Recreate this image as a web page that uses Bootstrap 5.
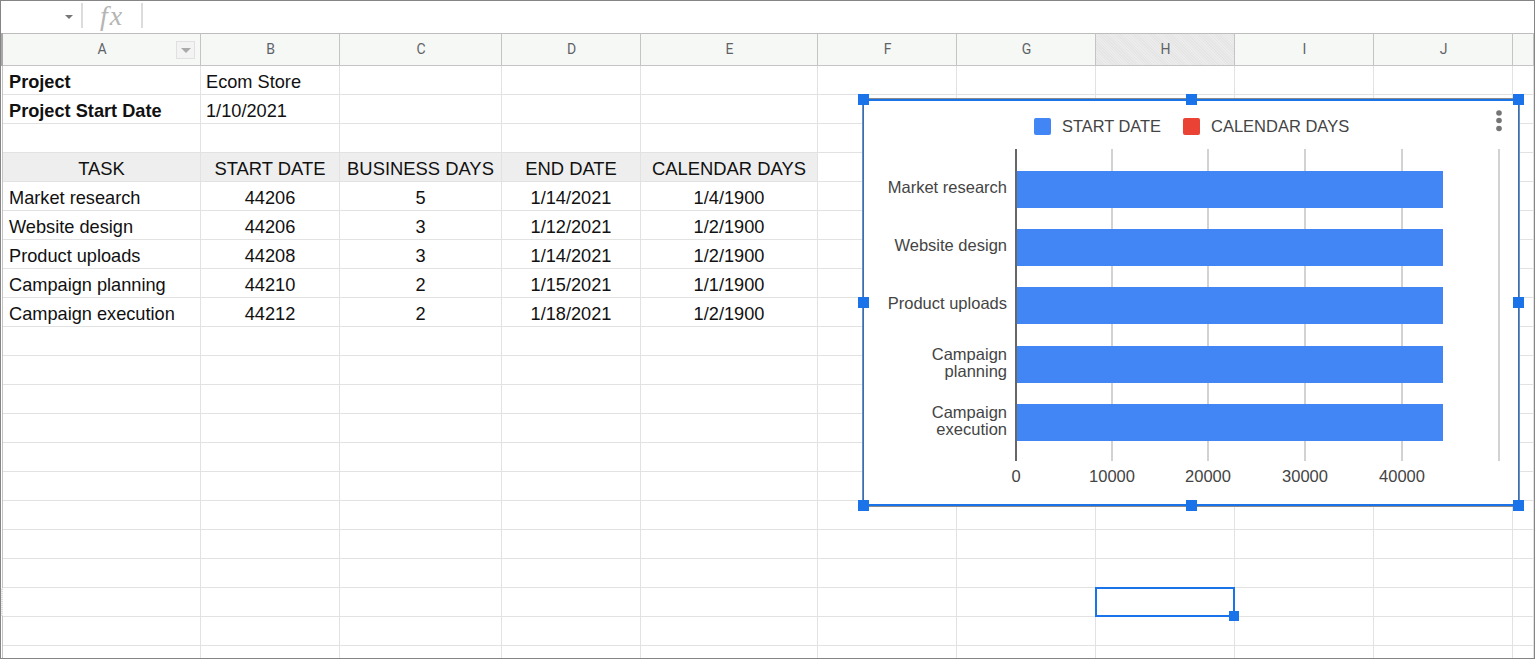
<!DOCTYPE html>
<html lang="en">
<head>
<meta charset="UTF-8" />
<meta name="viewport" content="width=device-width, initial-scale=1.0" />
<title>Ecom Store - Gantt</title>
<link href="https://cdn.jsdelivr.net/npm/bootstrap@5.3.0/dist/css/bootstrap.min.css" rel="stylesheet" />
<style>
  html, body { height: 100%; overflow: hidden; background: #fff; }
  .sheet-frame { width: 1535px; height: 659px; border: 1px solid #858585; overflow: hidden; position: relative; font-family: "Liberation Sans", Arial, sans-serif; color: #111; }
  .formula-bar { height: 32px; }
  .name-box { width: 80px; }
  .caret-down { width: 0; height: 0; border-left: 4px solid transparent; border-right: 4px solid transparent; border-top: 4px solid #777; margin: 14px 8px 0 0; }
  .bar-divider { width: 2px; height: 25px; margin-top: 2px; background: #dcdcdc; }
  .fx-label { width: 58px; height: 32px; font-family: "Liberation Serif", serif; font-style: italic; font-size: 28px; letter-spacing: 2px; line-height: 30px; color: #b5b5b5; padding-left: 17px; }
  .sheet-body { padding-left: 2px; background: linear-gradient(90deg, #fff 1px, #c4c4c4 1px) no-repeat; background-size: 2px 100%; }
  .grid-table { table-layout: fixed; border-collapse: separate; border-spacing: 0; width: 1531px; font-size: 18.2px; background: #fff; }
  .grid-table td, .grid-table th { height: 29px; padding: 4px 0 0 5px; border-right: 1px solid #e2e2e2; border-bottom: 1px solid #e2e2e2; white-space: nowrap; overflow: hidden; line-height: 24px; }
  .grid-table td:first-child { padding-left: 6px; }
  .grid-table .col-head th { height: 33px; padding: 0 0 1px 1px; font-family: Roboto, sans-serif; font-weight: 400; font-size: 14px; color: #5f6368; background: #f6f8f5; text-align: center; border-top: 1px solid #bdbdbd; border-right: 1px solid #c4c4c4; border-bottom: 1px solid #c4c4c4; position: relative; }
  .grid-table .col-head th.col-active { background: repeating-linear-gradient(45deg, #e5e5e5 0 1px, #ececec 1px 2px); }
  .filter-btn { position: absolute; right: 5px; top: 7px; width: 19px; height: 18px; border: 1px solid #e0e0e0; background: #f3f3f3; }
  .filter-btn::after { content: ""; position: absolute; left: 4px; top: 6px; border-left: 5px solid transparent; border-right: 5px solid transparent; border-top: 5px solid #aaa; }
  .grid-table td.cell-center { text-align: center; padding: 4px 0 0; }
  .grid-table td.cell-head { background: #eeeeee; text-align: center; padding: 4px 0 0; font-size: 18.4px; }
  .gutter-head { position: absolute; left: 0; top: 32px; width: 2px; height: 33px; background: #a8a8a8; }
  .gutter-mark { position: absolute; left: 0; top: 587px; width: 2px; height: 28px; background: repeating-linear-gradient(0deg, #ddd 0 1px, #f2f2f2 1px 2px); }
  .chart-box { position: absolute; left: 862px; top: 98px; width: 656px; height: 407px; background: #fff; border: 2px solid #1a73e8; border-left-width: 1px; border-right-width: 1px; box-shadow: -1px -1px 0 #8a8a8a, 1px 1px 0 #8a8a8a; }
  .chart-box svg { display: block; font-family: "Liberation Sans", Arial, sans-serif; }
  .grip { position: absolute; width: 11px; height: 11px; background: #1a73e8; }
  .sel-cell { position: absolute; left: 1094px; top: 586px; width: 140px; height: 30px; border: 2px solid #1a73e8; }
  .sel-handle { position: absolute; left: 1228px; top: 610px; width: 10px; height: 10px; background: #1a73e8; }
</style>
</head>
<body class="m-0">
<div class="sheet-frame">
  <div class="formula-bar d-flex">
    <div class="name-box d-flex justify-content-end"><span class="caret-down"></span></div>
    <div class="bar-divider"></div>
    <div class="fx-label">fx</div>
    <div class="bar-divider"></div>
  </div>
  <div class="sheet-body">
    <table class="grid-table">
      <colgroup>
        <col style="width:198px"><col style="width:139px"><col style="width:162px"><col style="width:139px"><col style="width:177px">
        <col style="width:139px"><col style="width:139px"><col style="width:139px"><col style="width:139px"><col style="width:139px"><col style="width:21px">
      </colgroup>
      <tbody id="grid-rows">
        <tr class="col-head">
          <th>A<span class="filter-btn"></span></th><th>B</th><th>C</th><th>D</th><th>E</th><th>F</th><th>G</th><th class="col-active">H</th><th>I</th><th>J</th><th></th>
        </tr>
        <tr><td class="fw-bold">Project</td><td>Ecom Store</td><td></td><td></td><td></td><td></td><td></td><td></td><td></td><td></td><td></td></tr>
        <tr><td class="fw-bold">Project Start Date</td><td>1/10/2021</td><td></td><td></td><td></td><td></td><td></td><td></td><td></td><td></td><td></td></tr>
        <tr><td></td><td></td><td></td><td></td><td></td><td></td><td></td><td></td><td></td><td></td><td></td></tr>
        <tr><td class="cell-head">TASK</td><td class="cell-head">START DATE</td><td class="cell-head">BUSINESS DAYS</td><td class="cell-head">END DATE</td><td class="cell-head">CALENDAR DAYS</td><td></td><td></td><td></td><td></td><td></td><td></td></tr>
        <tr><td>Market research</td><td class="cell-center">44206</td><td class="cell-center">5</td><td class="cell-center">1/14/2021</td><td class="cell-center">1/4/1900</td><td></td><td></td><td></td><td></td><td></td><td></td></tr>
        <tr><td>Website design</td><td class="cell-center">44206</td><td class="cell-center">3</td><td class="cell-center">1/12/2021</td><td class="cell-center">1/2/1900</td><td></td><td></td><td></td><td></td><td></td><td></td></tr>
        <tr><td>Product uploads</td><td class="cell-center">44208</td><td class="cell-center">3</td><td class="cell-center">1/14/2021</td><td class="cell-center">1/2/1900</td><td></td><td></td><td></td><td></td><td></td><td></td></tr>
        <tr><td>Campaign planning</td><td class="cell-center">44210</td><td class="cell-center">2</td><td class="cell-center">1/15/2021</td><td class="cell-center">1/1/1900</td><td></td><td></td><td></td><td></td><td></td><td></td></tr>
        <tr><td>Campaign execution</td><td class="cell-center">44212</td><td class="cell-center">2</td><td class="cell-center">1/18/2021</td><td class="cell-center">1/2/1900</td><td></td><td></td><td></td><td></td><td></td><td></td></tr>
      </tbody>
    </table>
  </div>
  <span class="gutter-head"></span>
  <span class="gutter-mark"></span>

  <div class="chart-box">
    <svg width="654" height="403" viewBox="864 101 654 403">
      <rect x="1034" y="118" width="17" height="17" rx="2" fill="#4285f4"/>
      <text x="1062" y="132" font-size="16.4" fill="#444">START DATE</text>
      <rect x="1183" y="118" width="17" height="17" rx="2" fill="#ea4335"/>
      <text x="1211" y="132" font-size="16.5" fill="#444">CALENDAR DAYS</text>
      <circle cx="1499" cy="113" r="2.8" fill="#757575"/>
      <circle cx="1499" cy="120.5" r="2.8" fill="#757575"/>
      <circle cx="1499" cy="128.5" r="2.8" fill="#757575"/>
      <g stroke="#d2d2d2" stroke-width="2">
        <line x1="1112" y1="149" x2="1112" y2="461"/>
        <line x1="1208" y1="149" x2="1208" y2="461"/>
        <line x1="1305" y1="149" x2="1305" y2="461"/>
        <line x1="1402" y1="149" x2="1402" y2="461"/>
        <line x1="1499" y1="149" x2="1499" y2="461"/>
      </g>
      <g fill="#4285f4">
        <rect x="1016" y="171" width="427" height="37"/>
        <rect x="1016" y="229" width="427" height="37"/>
        <rect x="1016" y="287" width="427" height="37"/>
        <rect x="1016" y="346" width="427" height="37"/>
        <rect x="1016" y="404" width="427" height="37"/>
      </g>
      <line x1="1016" y1="149" x2="1016" y2="461" stroke="#666" stroke-width="2"/>
      <g font-size="16.5" fill="#444" text-anchor="end">
        <text x="1007" y="193">Market research</text>
        <text x="1007" y="251">Website design</text>
        <text x="1007" y="309">Product uploads</text>
        <text x="1007" y="360">Campaign</text>
        <text x="1007" y="377">planning</text>
        <text x="1007" y="418">Campaign</text>
        <text x="1007" y="435">execution</text>
      </g>
      <g font-size="16.5" fill="#444" text-anchor="middle">
        <text x="1016" y="482">0</text>
        <text x="1112" y="482">10000</text>
        <text x="1208" y="482">20000</text>
        <text x="1305" y="482">30000</text>
        <text x="1402" y="482">40000</text>
      </g>
    </svg>
  </div>
  <span class="grip" style="left:857px;top:93px"></span>
  <span class="grip" style="left:1185px;top:93px"></span>
  <span class="grip" style="left:1512px;top:93px"></span>
  <span class="grip" style="left:857px;top:296px"></span>
  <span class="grip" style="left:1512px;top:296px"></span>
  <span class="grip" style="left:857px;top:499px"></span>
  <span class="grip" style="left:1185px;top:499px"></span>
  <span class="grip" style="left:1512px;top:499px"></span>
  <div class="sel-cell"></div>
  <div class="sel-handle"></div>
</div>
<script>
  // blank rows below the data
  const tbody = document.getElementById("grid-rows");
  for (let r = 0; r < 12; r++) {
    const tr = document.createElement("tr");
    for (let c = 0; c < 11; c++) tr.appendChild(document.createElement("td"));
    tbody.appendChild(tr);
  }
</script>
<script src="https://cdn.jsdelivr.net/npm/bootstrap@5.3.0/dist/js/bootstrap.bundle.min.js"></script>
</body>
</html>
